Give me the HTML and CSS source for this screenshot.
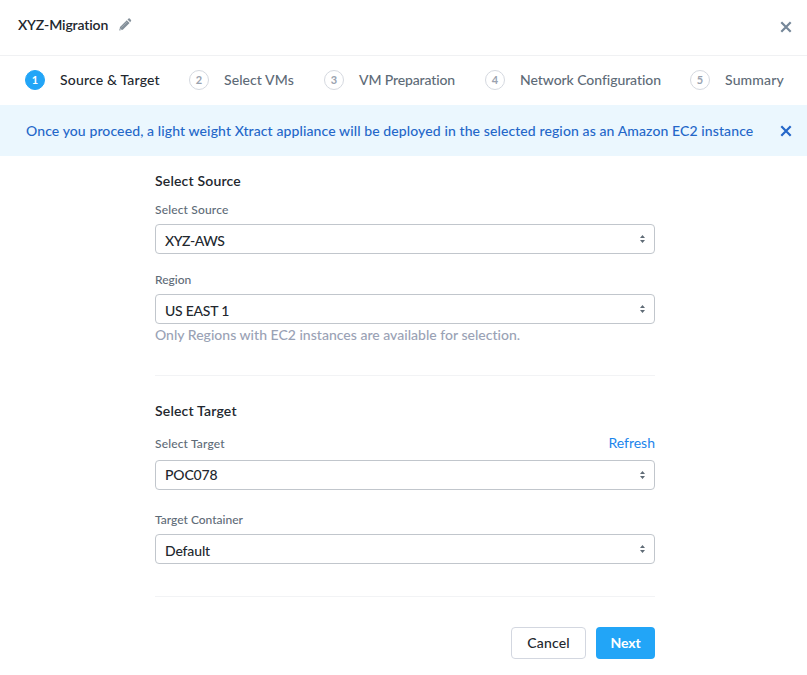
FILE: index.html
```html
<!DOCTYPE html>
<html lang="en">
<head>
<meta charset="utf-8">
<title>XYZ-Migration</title>
<link rel="stylesheet" href="styles.css">
</head>
<body>
<header class="header">
  <h1 class="title">XYZ-Migration</h1>
  <svg class="pencil" width="13" height="13" viewBox="0 0 13 13"><path d="M.2 12.600 1 9 7.800 2.200 10.600 5 3.800 11.800ZM8.500 1.500 9.600.5Q10.100.1 10.700.6L12 1.900Q12.500 2.500 12 3.100L11.200 4.200Z" fill="#84909a"/><path d="M2.300 9.700 8.300 3.700" stroke="#b4bbc0" stroke-width=".6"/><path d="M1 10.600 2.200 11.800" stroke="#fff" stroke-width="1"/></svg>
  <svg class="close" width="12" height="12" viewBox="0 0 12 12"><path d="M1.300 1.300 10.700 10.700M10.700 1.300 1.300 10.700" stroke="#758799" stroke-width="2.200"/></svg>
</header>
<nav class="steps">
  <div class="step active"><span class="num">1</span><span class="s1">Source &amp; Target</span></div>
  <div class="step"><span class="num">2</span><span class="s2">Select VMs</span></div>
  <div class="step"><span class="num">3</span><span class="s3">VM Preparation</span></div>
  <div class="step"><span class="num">4</span><span class="s4">Network Configuration</span></div>
  <div class="step"><span class="num">5</span><span class="s5">Summary</span></div>
</nav>
<div class="banner">
  <span>Once you proceed, a light weight Xtract appliance will be deployed in the selected region as an Amazon EC2 instance</span>
  <svg class="close" width="12" height="12" viewBox="0 0 12 12"><path d="M1.300 1.300 10.700 10.700M10.700 1.300 1.300 10.700" stroke="#2467c9" stroke-width="2.200"/></svg>
</div>
<main class="form">
  <section class="source">
    <h2>Select Source</h2>
    <label class="label wide">Select Source</label>
    <div class="select low"><span class="v-aws">XYZ-AWS</span><svg width="5" height="8" viewBox="0 0 5 8"><path d="M2.500 0 5 3H0ZM0 5H5L2.500 8Z" fill="#606c77"/></svg></div>
    <label class="label region">Region</label>
    <div class="select low"><span class="v-region">US EAST 1</span><svg width="5" height="8" viewBox="0 0 5 8"><path d="M2.500 0 5 3H0ZM0 5H5L2.500 8Z" fill="#606c77"/></svg></div>
    <p class="note">Only Regions with EC2 instances are available for selection.</p>
  </section>
  <section class="target">
    <h2>Select Target</h2>
    <div class="row"><label class="label wide">Select Target</label><a class="refresh">Refresh</a></div>
    <div class="select"><span class="v-poc">POC078</span><svg width="5" height="8" viewBox="0 0 5 8"><path d="M2.500 0 5 3H0ZM0 5H5L2.500 8Z" fill="#606c77"/></svg></div>
    <label class="label container">Target Container</label>
    <div class="select low"><span class="v-default">Default</span><svg width="5" height="8" viewBox="0 0 5 8"><path d="M2.500 0 5 3H0ZM0 5H5L2.500 8Z" fill="#606c77"/></svg></div>
  </section>
  <footer class="actions">
    <button class="btn cancel">Cancel</button>
    <button class="btn next">Next</button>
  </footer>
</main>
</body>
</html>
```
FILE: styles.css
```css
* { box-sizing: border-box; }
body {
  margin: 0;
  background: #fff;
  color: #22272e;
  font: 500 14px/20px Lato, "Open Sans", sans-serif;
  font-variant-ligatures: none;
  white-space: nowrap;
}
h1, h2, p { margin: 0; font-size: 14px; line-height: 20px; }
svg { display: block; flex: none; }
.header {
  display: flex;
  height: 56px;
  padding: 15px 15px 0 18px;
  border-bottom: 1px solid #f0f1f3;
}
.title { width: 101px; font-weight: 600; letter-spacing: -.14px; }
.pencil { margin-top: 3px; }
.close { margin-left: auto; }
.header .close { margin-top: 6px; }
.steps {
  display: grid;
  grid-template-columns: 164px 135px 161px 205px auto;
  align-items: start;
  height: 49px;
  padding: 14px 0 0 25px;
  color: #5e6b77;
}
.step { display: flex; }
.num {
  width: 20px;
  height: 20px;
  margin-right: 15px;
  border: 1px solid #d5d9e0;
  border-radius: 50%;
  color: #9aa2af;
  font-size: 11px;
  font-weight: 700;
  line-height: 18px;
  text-align: center;
}
.active { color: #22272e; }
.active .num { border-color: #22a5f7; background: #22a5f7; color: #fff; }
.s1 { letter-spacing: .17px; }
.s2 { letter-spacing: .08px; }
.s3 { letter-spacing: -.13px; }
.s4 { letter-spacing: -.06px; }
.s5 { letter-spacing: .15px; }
.banner {
  display: flex;
  align-items: center;
  height: 51px;
  padding: 0 15px 0 26px;
  background: #ebf7fe;
  color: #2467c9;
  letter-spacing: .104px;
}
.form { width: 500px; margin-left: 155px; }
.source { height: 220px; padding-top: 15px; border-bottom: 1px solid #f2f3f5; }
.target { height: 221px; padding-top: 25px; border-bottom: 1px solid #f2f3f5; }
h2 { font-weight: 600; letter-spacing: .18px; }
.label { display: block; color: #5e6b77; font-size: 12px; line-height: 16px; }
.source .label { margin-top: 11px; margin-bottom: 6px; }
.source .region { margin-top: 18px; }
.wide { letter-spacing: .16px; }
.select {
  display: flex;
  justify-content: space-between;
  align-items: center;
  height: 30px;
  padding: 0 9px;
  border: 1px solid #c1c6cc;
  border-radius: 4px;
}
.low span { padding-top: 3px; }
.v-aws { letter-spacing: -.45px; }
.v-region { letter-spacing: -.25px; }
.v-poc { letter-spacing: -.15px; }
.v-default { letter-spacing: -.14px; }
.note { margin-top: 1px; color: #9aa2b5; letter-spacing: .015px; }
.row { display: flex; justify-content: space-between; align-items: center; margin-top: 12px; margin-bottom: 7px; }
.row .label { padding-top: 2px; line-height: 16px; }
.refresh { color: #1b85ec; font-weight: 400; }
.container { margin-top: 22px; margin-bottom: 6px; }
.actions { display: flex; justify-content: flex-end; gap: 10px; padding-top: 30px; }
.btn { height: 32px; padding: 0; border-radius: 4px; font: inherit; text-align: center; }
.cancel { width: 75px; border: 1px solid #d3d7e0; background: #fff; color: #22272e; letter-spacing: .17px; }
.next { width: 59px; border: 0; background: #22a5f7; color: #fff; font-weight: 700; letter-spacing: -.1px; }
```
